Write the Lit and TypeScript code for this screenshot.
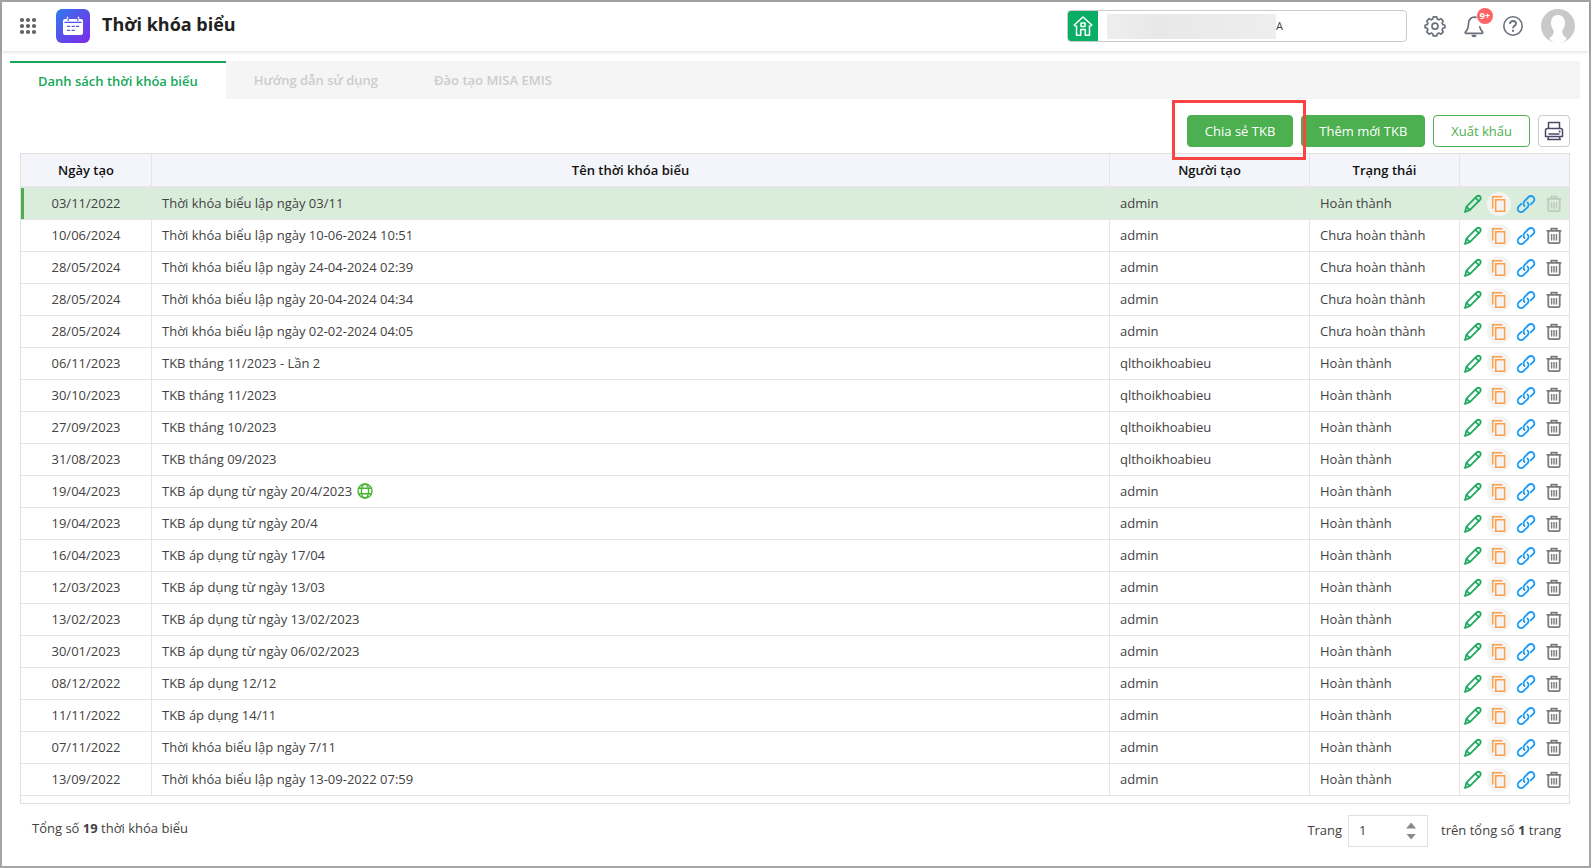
import { LitElement, html, css, svg } from "lit";
import { customElement, property, state } from "lit/decorators.js";
import { classMap } from "lit/directives/class-map.js";

interface Timetable {
  date: string;
  name: string;
  author: string;
  done: boolean;
  published?: boolean;
}

const row = (date: string, name: string, author = "admin", done = true, published = false): Timetable => ({
  date,
  name,
  author,
  done,
  published,
});

const TIMETABLES: Timetable[] = [
  row("03/11/2022", "Thời khóa biểu lập ngày 03/11"),
  row("10/06/2024", "Thời khóa biểu lập ngày 10-06-2024 10:51", "admin", false),
  row("28/05/2024", "Thời khóa biểu lập ngày 24-04-2024 02:39", "admin", false),
  row("28/05/2024", "Thời khóa biểu lập ngày 20-04-2024 04:34", "admin", false),
  row("28/05/2024", "Thời khóa biểu lập ngày 02-02-2024 04:05", "admin", false),
  row("06/11/2023", "TKB tháng 11/2023 - Lần 2", "qlthoikhoabieu"),
  row("30/10/2023", "TKB tháng 11/2023", "qlthoikhoabieu"),
  row("27/09/2023", "TKB tháng 10/2023", "qlthoikhoabieu"),
  row("31/08/2023", "TKB tháng 09/2023", "qlthoikhoabieu"),
  row("19/04/2023", "TKB áp dụng từ ngày 20/4/2023", "admin", true, true),
  row("19/04/2023", "TKB áp dụng từ ngày 20/4"),
  row("16/04/2023", "TKB áp dụng từ ngày 17/04"),
  row("12/03/2023", "TKB áp dụng từ ngày 13/03"),
  row("13/02/2023", "TKB áp dụng từ ngày 13/02/2023"),
  row("30/01/2023", "TKB áp dụng từ ngày 06/02/2023"),
  row("08/12/2022", "TKB áp dụng 12/12"),
  row("11/11/2022", "TKB áp dụng 14/11"),
  row("07/11/2022", "Thời khóa biểu lập ngày 7/11"),
  row("13/09/2022", "Thời khóa biểu lập ngày 13-09-2022 07:59"),
];

const GLYPHS = {
  apps: svg`<g fill="#616161">${[4, 10, 16].map((y) =>
    [4, 10, 16].map((x) => svg`<circle cx=${x} cy=${y} r="2.1" />`)
  )}</g>`,
  calendar: svg`
    <path fill="#fff" d="M2 3h16a2 2 0 0 1 2 2v12a2 2 0 0 1-2 2H2a2 2 0 0 1-2-2V5a2 2 0 0 1 2-2z"/>
    <path fill="none" stroke="#fff" stroke-width="1.4" d="M4.5 0.8v3M15.5 0.8v3"/>
    <path fill="none" stroke="#4f55ea" stroke-width="1.2" d="M1.4 6.3h17.2M5.2 2.5v2.6M14.8 2.5v2.6M4 10.4h3.2M8.6 10.4h3.2M13 10.4h3.2M4 14.4h3.2M8.6 14.4h3.2"/>`,
  home: svg`<g fill="none" stroke="#fff" stroke-width="1.5" stroke-linejoin="round">
    <path d="M3.6 11.3 2.2 10 11 2l8.800 8-1.400 1.300"/>
    <path d="M4.500 10.500V20.300H8.700V14.500h4.600v5.800h4.200V10.500"/>
    <path d="M9 8h4v3.600H9z"/></g>`,
  gear: svg`<g fill="none" stroke="#6b717c" stroke-width="1.7" stroke-linejoin="round">
    <path d="M10.300 2.900h3.400l.6 2.200 1.500.7 2.100-1.100 2.300 2.300-1.100 2.100.7 1.500 2.100.6v2.400l-2.100.7-.7 1.500 1.100 2.100-2.300 2.300-2.100-1.100-1.500.7-.6 2.100h-3.400l-.6-2.100-1.500-.7-2.100 1.100-2.300-2.300 1.100-2.100-.7-1.500-2.100-.7v-2.400l2.100-.6.7-1.500-1.100-2.100 2.300-2.300 2.100 1.100 1.500-.7z"/>
    <circle cx="12" cy="12.200" r="3"/></g>`,
  bell: svg`<g fill="none" stroke="#6b717c" stroke-width="1.7" stroke-linejoin="round" stroke-linecap="round">
    <path d="M14 3.400C9.500 2.200 6.500 5.500 6.500 9.500c0 4.200-.8 6.300-3 8.300-.6.800-.2 1.500.6 1.500h15.800c.800 0 1.200-.700.6-1.500-1.400-1.300-2.300-2.900-2.700-5"/>
    <path d="M10.300 21.700c.8.900 2.600.9 3.400 0z" fill="#6b717c"/></g>`,
  help: svg`<g fill="none" stroke="#6b717c" stroke-width="1.600">
    <circle cx="12" cy="12" r="9.200"/>
    <path stroke-width="1.800" d="M9 9.900c0-1.800 1.300-2.900 3-2.900s3 1.100 3 2.700c0 2-3 2.200-3 4.600"/>
    <path stroke-width="2" d="M12 15.800v2"/></g>`,
  avatar: svg`<circle cx="17" cy="17" r="17" fill="#c9c9c9"/>
    <path fill="#fff" d="M17 6c4.400 0 7 3.300 7 8 0 3.200-1.200 5.700-2.800 7.400 0 2.800.8 4.800 3 6.600l1.600 1.400C24 32.500 21 34.200 17 34.200S10 32.500 8.200 29.400l1.600-1.400c2.200-1.800 3-3.800 3-6.600C11.200 19.700 10 17.200 10 14c0-4.700 2.600-8 7-8z"/>`,
  printer: svg`<g fill="none" stroke="#4a4a68" stroke-width="1.500" stroke-linejoin="round">
    <path d="M4.500 7.500V1.500h11v6"/>
    <path d="M4 15.500H1.500V9.500q0-2 2-2h13q2 0 2 2v6H16"/>
    <path d="M4.500 13h11M4.800 15.500 3.800 18.500h12.400l-1-3z"/></g><circle cx="15.600" cy="10.400" r="1" fill="#4a4a68"/>`,
  pencil: svg`<g fill="none" stroke="#1faa5f" stroke-width="1.600" stroke-linejoin="round" stroke-linecap="round">
    <path d="M1.800 16.200 3.100 11.400 12.300 2.200q1.600-1.300 3 0 1.300 1.400 0 3L6.300 14.300z"/>
    <path d="M11.300 3.400l3 3M3.200 11.600l2.900 2.700"/></g>`,
  copy: svg`<g fill="none" stroke="#ff9f45" stroke-width="1.500">
    <path d="M2.700 13.600V1.700h9.600"/><path d="M5.700 4.700h8.900v11.600H5.700z"/></g>`,
  link: svg`<g fill="none" stroke="#1a9bf0" stroke-width="1.600" stroke-linecap="round">
    <path d="M7.700 10.800a3.100 3.100 0 0 1 0-4.500l3.600-3.600a3 3 0 0 1 4.300 0 3 3 0 0 1 0 4.300l-2.400 2.400"/>
    <path d="M10.300 7.600a3.100 3.100 0 0 1 0 4.500l-3.600 3.400a3 3 0 0 1-4.300 0 3 3 0 0 1 0-4.300l2.400-2.400"/></g>`,
  trash: svg`<g fill="none" stroke="#7b7b7b" stroke-width="1.800">
    <path d="M1.700 3.800h14.600M6.300 3.500V1.700h5.400v1.800"/>
    <path d="M3.300 4v10.800q0 1.400 1.400 1.400h8.600q1.400 0 1.400-1.400V4"/>
    <path stroke-width="1.400" d="M6.600 7v6.500M9 7v6.500M11.400 7v6.500"/></g>`,
  globe: svg`<g fill="none" stroke="#45b52f" stroke-width="1.400">
    <circle cx="8" cy="8" r="7"/><ellipse cx="8" cy="8" rx="3.600" ry="7"/>
    <path d="M1.600 5.300h12.800M1.600 10.700h12.800"/></g>`,
};

// [viewBox size, drawn size]
const BOX: Record<keyof typeof GLYPHS, [number, number]> = {
  apps: [20, 20],
  calendar: [20, 20],
  home: [22, 22],
  gear: [24, 24],
  bell: [24, 24],
  help: [24, 24],
  avatar: [34, 34],
  printer: [20, 20],
  pencil: [18, 20],
  copy: [18, 18],
  link: [18, 20],
  trash: [18, 18],
  globe: [16, 16],
};

const icon = (name: keyof typeof GLYPHS) => {
  const [box, size] = BOX[name];
  return html`<svg class="icon" width=${size} height=${size} viewBox="0 0 ${box} ${box}" aria-hidden="true">${GLYPHS[name]}</svg>`;
};

const shared = css`
  * {
    box-sizing: border-box;
  }
  button,
  input {
    font: inherit;
    color: inherit;
    margin: 0;
  }
  button {
    cursor: pointer;
    padding: 0;
  }
  .icon {
    display: block;
    flex: none;
  }
  .icon-button {
    display: grid;
    place-items: center;
    width: 24px;
    height: 24px;
    border: 0;
    border-radius: 50%;
    background: none;
  }
`;

@customElement("app-header")
export class AppHeader extends LitElement {
  static styles = [
    shared,
    css`
      :host {
        display: block;
      }
      .bar {
        display: flex;
        align-items: center;
        height: 49px;
        padding: 0 14px 1px 14px;
        background: #fff;
        box-shadow: 0 1px 4px rgba(0, 0, 0, 0.14);
      }
      .logo {
        display: grid;
        place-items: center;
        width: 34px;
        height: 34px;
        margin: 0 12px 0 16px;
        border-radius: 6px;
        background: linear-gradient(135deg, #2f7bee, #5a4ee9 50%, #7d2bea);
      }
      .title {
        flex: 1;
        margin: 0;
        padding-bottom: 4px;
        font-size: 18px;
        line-height: 24px;
        font-weight: 700;
        color: #212121;
      }
      .school {
        display: flex;
        align-items: center;
        width: 340px;
        height: 32px;
        margin: 0 16px 0 0;
        overflow: hidden;
        border: 1px solid #ccc;
        border-radius: 4px;
      }
      .school-home {
        display: grid;
        place-items: center;
        width: 30px;
        height: 32px;
        border: 0;
        background: #0aad64;
      }
      .mask {
        width: 169px;
        height: 25px;
        margin-left: 9px;
        background: linear-gradient(90deg, #eee, #e8e8e8 30%, #eee);
      }
      .school-name {
        flex: 1;
        min-width: 0;
        padding: 0;
        border: 0;
        outline: 0;
        background: none;
        font-size: 11px;
      }
      .tools {
        display: flex;
        align-items: center;
        gap: 15px;
      }
      .bell {
        position: relative;
      }
      .badge {
        position: absolute;
        top: -6px;
        left: 15px;
        width: 16px;
        height: 16px;
        border-radius: 50%;
        background: #ff6363;
        color: #fff;
        font-size: 9px;
        line-height: 15px;
        font-weight: 700;
        text-align: center;
      }
      .avatar {
        width: 34px;
        height: 34px;
        margin-left: 1px;
      }
    `,
  ];

  render() {
    return html`
      <header class="bar">
        <button class="icon-button" aria-label="Ứng dụng">${icon("apps")}</button>
        <span class="logo">${icon("calendar")}</span>
        <h1 class="title">Thời khóa biểu</h1>
        <div class="school">
          <button class="school-home" aria-label="Trang chủ">${icon("home")}</button>
          <span class="mask"></span>
          <input class="school-name" aria-label="Trường" value="A" />
        </div>
        <div class="tools">
          <button class="icon-button" aria-label="Thiết lập">${icon("gear")}</button>
          <button class="icon-button bell" aria-label="Thông báo">
            ${icon("bell")}<span class="badge">9+</span>
          </button>
          <button class="icon-button" aria-label="Trợ giúp">${icon("help")}</button>
          <button class="icon-button avatar" aria-label="Tài khoản">${icon("avatar")}</button>
        </div>
      </header>
    `;
  }
}

@customElement("timetable-grid")
export class TimetableGrid extends LitElement {
  @property({ attribute: false }) items: Timetable[] = [];
  @state() private selected = 0;

  static styles = [
    shared,
    css`
      :host {
        display: block;
      }
      .frame {
        padding-bottom: 7px;
        border: 1px solid #e0e0e0;
      }
      .grid {
        width: 100%;
        table-layout: fixed;
        border-collapse: separate;
        border-spacing: 0;
      }
      .col-date {
        width: 131px;
      }
      .col-author {
        width: 200px;
      }
      .col-status {
        width: 150px;
      }
      .col-actions {
        width: 109px;
      }
      th,
      td {
        padding: 0 10px;
        border-right: 1px solid #e5e5e5;
        border-bottom: 1px solid #e5e5e5;
        text-align: left;
        white-space: nowrap;
      }
      th:last-child,
      td:last-child {
        border-right: 0;
      }
      th {
        height: 34px;
        border-bottom-width: 2px;
        background: #f4f5fa;
        color: #111;
        font-weight: 600;
        text-align: center;
      }
      td {
        height: 32px;
        padding-bottom: 2px;
      }
      .date {
        text-align: center;
      }
      .selected td {
        background: #daeddb;
      }
      .selected .date {
        box-shadow: inset 3px 0 #4caf50;
      }
      .name {
        display: flex;
        align-items: center;
        gap: 5px;
      }
      td.actions {
        padding: 0;
      }
      .action-list {
        display: grid;
        grid-template-columns: 26px 25px 29px 28px;
        justify-items: center;
      }
      .copy {
        background: #f4f4f4;
      }
      .icon-button:disabled {
        opacity: 0.3;
        cursor: default;
      }
    `,
  ];

  render() {
    return html`
      <div class="frame">
        <table class="grid">
          <colgroup>
            <col class="col-date" />
            <col />
            <col class="col-author" />
            <col class="col-status" />
            <col class="col-actions" />
          </colgroup>
          <thead>
            <tr>
              <th>Ngày tạo</th>
              <th>Tên thời khóa biểu</th>
              <th>Người tạo</th>
              <th>Trạng thái</th>
              <th></th>
            </tr>
          </thead>
          <tbody>
            ${this.items.map(
              (item, i) => html`
                <tr class=${classMap({ selected: i === this.selected })} @click=${() => (this.selected = i)}>
                  <td class="date">${item.date}</td>
                  <td><span class="name">${item.name}${item.published ? icon("globe") : ""}</span></td>
                  <td>${item.author}</td>
                  <td>${item.done ? "Hoàn thành" : "Chưa hoàn thành"}</td>
                  <td class="actions">
                    <div class="action-list">
                      <button class="icon-button" aria-label="Sửa">${icon("pencil")}</button>
                      <button class="icon-button copy" aria-label="Nhân bản">${icon("copy")}</button>
                      <button class="icon-button" aria-label="Liên kết">${icon("link")}</button>
                      <button class="icon-button" aria-label="Xóa" ?disabled=${i === 0}>${icon("trash")}</button>
                    </div>
                  </td>
                </tr>
              `
            )}
          </tbody>
        </table>
      </div>
    `;
  }
}

@customElement("app-root")
export class AppRoot extends LitElement {
  @state() private tab = 0;
  @state() private page = 1;

  private tabs = ["Danh sách thời khóa biểu", "Hướng dẫn sử dụng", "Đào tạo MISA EMIS"];

  static styles = [
    shared,
    css`
      :host {
        display: block;
        box-sizing: border-box;
        min-height: 100vh;
        border: 2px solid #a5a5a5;
        background: #fff;
        color: #424242;
        font-family: "Open Sans", "Noto Sans", sans-serif;
        font-size: 13px;
        line-height: 18px;
      }
      .tabs {
        display: flex;
        height: 38px;
        margin: 10px 9px 0 8px;
        background: #f5f5f5;
      }
      .tab {
        padding: 0 28px;
        border: 0;
        background: none;
        color: #ccc;
        font-weight: 600;
      }
      .tab.active {
        border-top: 2px solid #14a858;
        background: #fff;
        color: #14a858;
      }
      .content {
        padding: 16px 19px 0 18px;
      }
      .toolbar {
        display: flex;
        justify-content: flex-end;
        gap: 8px;
        margin-bottom: 6px;
      }
      .button {
        height: 32px;
        padding: 0 17px;
        border: 1px solid #4caf50;
        border-radius: 4px;
        background: #4caf50;
        color: #fff;
      }
      .button.outline {
        background: #fff;
        color: #4caf50;
      }
      .button.square {
        display: grid;
        place-items: center;
        width: 32px;
        padding: 0;
        border-color: #ccc;
        background: #fff;
      }
      .highlighted {
        position: relative;
      }
      .highlight {
        position: absolute;
        z-index: 1;
        inset: -15px -13px -13px -15px;
        border: 3px solid #fb4343;
        pointer-events: none;
      }
      .footer {
        display: flex;
        align-items: center;
        justify-content: space-between;
        padding: 11px 9px 0 12px;
      }
      .total {
        margin: 0;
        padding-bottom: 6px;
      }
      .pager {
        display: flex;
        align-items: center;
      }
      .pager-text {
        padding-bottom: 2px;
      }
      .stepper {
        display: flex;
        align-items: center;
        width: 80px;
        height: 32px;
        margin: 0 13px 0 6px;
        padding: 0 11px 0 10px;
        border: 1px solid #e0e0e0;
      }
      .page-input {
        flex: 1;
        min-width: 0;
        padding: 0 0 2px;
        border: 0;
        outline: 0;
        background: none;
      }
      .arrows {
        display: grid;
        gap: 5px;
      }
      .arrow {
        width: 10px;
        height: 6px;
        border: 0;
        background: #8a8a8a;
        clip-path: polygon(50% 0, 100% 100%, 0 100%);
      }
      .arrow.down {
        clip-path: polygon(0 0, 100% 0, 50% 100%);
      }
    `,
  ];

  render() {
    return html`
      <app-header></app-header>
      <nav class="tabs" role="tablist">
        ${this.tabs.map(
          (label, i) => html`<button
            class=${classMap({ tab: true, active: i === this.tab })}
            role="tab"
            aria-selected=${i === this.tab}
            @click=${() => (this.tab = i)}
          >${label}</button>`
        )}
      </nav>
      <main class="content">
        <div class="toolbar">
          <div class="highlighted">
            <button class="button">Chia sẻ TKB</button>
            <span class="highlight"></span>
          </div>
          <button class="button">Thêm mới TKB</button>
          <button class="button outline">Xuất khẩu</button>
          <button class="button square" aria-label="In">${icon("printer")}</button>
        </div>
        <timetable-grid .items=${TIMETABLES}></timetable-grid>
        <footer class="footer">
          <p class="total">Tổng số <b>${TIMETABLES.length}</b> thời khóa biểu</p>
          <div class="pager">
            <label class="pager-text" for="page">Trang</label>
            <div class="stepper">
              <input id="page" class="page-input" inputmode="numeric" .value=${String(this.page)} />
              <span class="arrows">
                <button class="arrow" aria-label="Trang sau"></button>
                <button class="arrow down" aria-label="Trang trước"></button>
              </span>
            </div>
            <span class="pager-text">trên tổng số <b>1</b> trang</span>
          </div>
        </footer>
      </main>
    `;
  }
}
